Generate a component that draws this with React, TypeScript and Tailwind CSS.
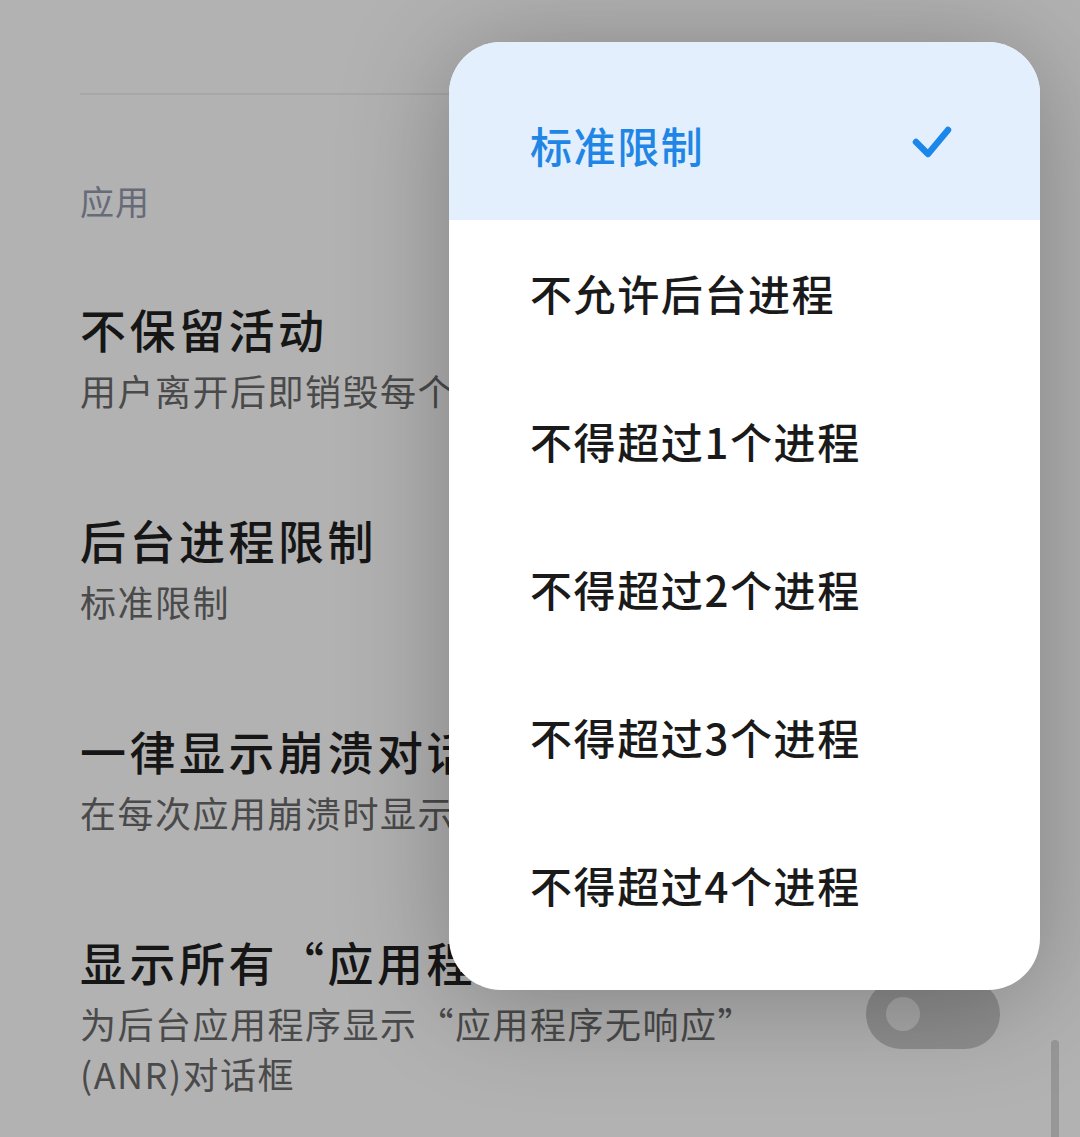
import React from "react";

function Toggle() {
  return (
    <div className="w-[134px] h-[70px] rounded-full bg-[#8e8e8e] flex items-center pl-[20px] shrink-0">
      <div className="w-[34px] h-[34px] rounded-full bg-[#a8a8a8]" />
    </div>
  );
}

type ItemProps = { title: string; sub: React.ReactNode; toggle?: boolean };

function Item({ title, sub, toggle }: ItemProps) {
  return (
    <div className="flex items-center py-[46px]">
      <div className="flex-1 min-w-0">
        <div className="text-[46px] leading-[64px] tracking-[3.5px] font-medium text-[#161616] whitespace-nowrap">{title}</div>
        <div className="mt-[5px] text-[36px] leading-[50px] tracking-[1.5px] text-[#4a4a4a]">{sub}</div>
      </div>
      {toggle ? <Toggle /> : null}
    </div>
  );
}

const options = [
  "标准限制",
  "不允许后台进程",
  "不得超过1个进程",
  "不得超过2个进程",
  "不得超过3个进程",
  "不得超过4个进程",
];

export default function App() {
  return (
    <div className="relative w-[1080px] h-[1137px] overflow-hidden bg-[#b2b2b2] font-['Noto_Sans_CJK_SC','Noto_Sans',sans-serif]">
      <div className="px-[80px] pt-[93px]">
        <div className="h-[2px] bg-[#a7a7a7]" />
        <div className="mt-[84px] text-[34px] leading-[44px] tracking-[1px] text-[#676b78]">应用</div>
        <div className="mt-[27px]">
          <Item title="不保留活动" sub="用户离开后即销毁每个活动" toggle />
          <Item title="后台进程限制" sub="标准限制" />
          <Item title="一律显示崩溃对话框" sub="在每次应用崩溃时显示对话框" toggle />
          <Item
            title="显示所有“应用程序无响应”"
            sub={
              <>
                为后台应用程序显示“应用程序无响应”
                <br />
                (ANR)对话框
              </>
            }
            toggle
          />
        </div>
      </div>

      {/* scrollbar */}
      <div className="absolute left-[1051px] top-[1040px] w-[8px] h-[120px] rounded-full bg-[#979797]" />

      {/* popup menu */}
      <div className="absolute left-[449px] top-[42px] w-[591px] h-[948px] rounded-[52px] bg-white overflow-hidden shadow-[0_10px_110px_rgba(0,0,0,0.28)] flex flex-col pb-[30px]">
        {options.map((o, i) =>
          i === 0 ? (
            <div key={o} className="h-[178px] pt-[30px] pb-[4px] bg-[#e3effd] flex items-center pl-[81px] pr-[86px]">
              <span className="flex-1 text-[42px] tracking-[1.6px] font-medium text-[#1f86e6]">{o}</span>
              <svg width="44" height="40" viewBox="0 0 44 40" fill="none">
                <path d="M6 18 L18 30 L38 6" stroke="#1b87ea" strokeWidth="6.5" strokeLinecap="round" strokeLinejoin="round" />
              </svg>
            </div>
          ) : (
            <div key={o} className="h-[148px] pb-[4px] flex items-center pl-[81px]">
              <span className="text-[42px] tracking-[1.6px] font-medium text-[#1a1a1a]">{o}</span>
            </div>
          )
        )}
      </div>
    </div>
  );
}
